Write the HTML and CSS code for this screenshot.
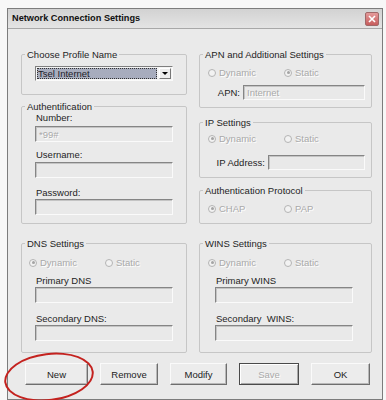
FILE: index.html
```html
<!DOCTYPE html>
<html lang="en">
  <head>
    <meta charset="UTF-8" />
    <title>Network Connection Settings</title>
    <link rel="stylesheet" href="styles.css">
  </head>
  <body>
    <div class="window">
      <div class="titlebar">
        <span class="title">Network Connection Settings</span>
        <span class="close">
          <svg width="8" height="8" viewBox="0 0 8 8">
            <path d="M1 1L7 7M7 1L1 7" stroke="#fff" stroke-width="1.6" />
          </svg>
        </span>
      </div>

      <div class="content">
        <div class="columns">
          <div class="col">
            <fieldset class="group profile">
              <legend>Choose Profile Name</legend>
              <div class="inner">
                <div class="combo">
                  <span class="combo-value">Tsel Internet</span>
                  <span class="combo-btn"><span class="arrow"></span></span>
                </div>
              </div>
            </fieldset>

            <fieldset class="group auth">
              <legend>Authentification</legend>
              <div class="inner">
                <div class="label first">Number:</div>
                <div class="field gap3"><span class="dim">*99#</span></div>
                <div class="label gap6">Username:</div>
                <div class="field gap1"></div>
                <div class="label gap8">Password:</div>
                <div class="field"></div>
              </div>
            </fieldset>
          </div>

          <div class="col">
            <fieldset class="group apn">
              <legend>APN and Additional Settings</legend>
              <div class="radios gap5">
                <span class="radio"><i class="dot"></i><span class="dim">Dynamic</span></span>
                <span class="radio"><i class="dot on"></i><span class="dim">Static</span></span>
              </div>
              <div class="row gap6">
                <span>APN:</span>
                <div class="field apn-field"><span class="dim">Internet</span></div>
              </div>
            </fieldset>

            <fieldset class="group ip">
              <legend>IP Settings</legend>
              <div class="radios gap3">
                <span class="radio"><i class="dot on"></i><span class="dim">Dynamic</span></span>
                <span class="radio"><i class="dot"></i><span class="dim">Static</span></span>
              </div>
              <div class="row gap10">
                <span>IP Address:</span>
                <div class="field ip-field"></div>
              </div>
            </fieldset>

            <fieldset class="group proto">
              <legend>Authentication Protocol</legend>
              <div class="radios gap5">
                <span class="radio"><i class="dot on"></i><span class="dim">CHAP</span></span>
                <span class="radio"><i class="dot"></i><span class="dim">PAP</span></span>
              </div>
            </fieldset>
          </div>
        </div>

        <div class="columns lower">
          <fieldset class="group dns">
            <legend>DNS Settings</legend>
            <div class="radios gap6">
              <span class="radio"><i class="dot on"></i><span class="dim">Dynamic</span></span>
              <span class="radio"><i class="dot"></i><span class="dim">Static</span></span>
            </div>
            <div class="inner">
              <div class="label gap5">Primary DNS</div>
              <div class="field"></div>
              <div class="label gap9">Secondary DNS:</div>
              <div class="field"></div>
            </div>
          </fieldset>

          <fieldset class="group wins">
            <legend>WINS Settings</legend>
            <div class="radios gap6">
              <span class="radio"><i class="dot on"></i><span class="dim">Dynamic</span></span>
              <span class="radio"><i class="dot"></i><span class="dim">Static</span></span>
            </div>
            <div class="inner wide">
              <div class="label gap5">Primary WINS</div>
              <div class="field"></div>
              <div class="label gap9">Secondary&nbsp; WINS:</div>
              <div class="field"></div>
            </div>
          </fieldset>
        </div>

        <div class="buttons">
          <button class="btn new">New</button>
          <button class="btn remove">Remove</button>
          <button class="btn modify">Modify</button>
          <button class="btn save"><span class="dim">Save</span></button>
          <button class="btn ok">OK</button>
          <div class="circle"></div>
        </div>
      </div>
    </div>
  </body>
</html>
```

FILE: styles.css
```css
* {
  box-sizing: border-box;
  margin: 0;
  padding: 0;
}

body {
  background-color: #f7f7f7;
  font-family: "Liberation Sans", Arial, sans-serif;
  font-size: 9.5px;
  line-height: 13px;
  color: #1e1e1e;
}

.window {
  margin: 8px 0 0 7px;
  width: 376px;
  border: 1px solid #7c7c7c;
  background-color: #eaeaea;
}

.titlebar {
  height: 20px;
  display: flex;
  align-items: center;
  justify-content: space-between;
  padding: 0 3px 0 4px;
  background: linear-gradient(#d2d2d2, #e4e4e4);
  border-bottom: 1px solid #a8a8a8;
}

.title {
  font-weight: bold;
  font-size: 9.2px;
  color: #111;
}

.close {
  width: 14px;
  height: 14px;
  display: flex;
  align-items: center;
  justify-content: center;
  border: 1px solid #a06868;
  border-radius: 2px;
  background: linear-gradient(#e49a9a, #c65c5c);
}

.content {
  position: relative;
  padding: 19px 10px 14px 13px;
}

.columns {
  display: grid;
  grid-template-columns: 166px 173px;
  column-gap: 12px;
}

.lower {
  margin-top: 13px;
}

.col {
  display: flex;
  flex-direction: column;
}

.group {
  border: 1px solid #c6c6c6;
  border-radius: 2px;
  padding: 0;
  min-width: 0;
}

.group legend {
  margin-left: 3px;
  padding: 0 2px;
  line-height: 13px;
}

.inner {
  padding: 0 13px;
}

.inner.wide {
  padding: 0 18px 0 15px;
}

.profile {
  height: 47px;
}

.auth {
  height: 124px;
  margin-top: 5px;
}

.apn {
  height: 60px;
}

.ip {
  height: 62px;
  margin-top: 8px;
}

.proto {
  height: 40px;
  margin-top: 6px;
}

.dns,
.wins {
  height: 116px;
}

.dns .radios {
  padding-left: 7px;
}

.label {
  padding-left: 1px;
}

.first {
  margin-top: -1px;
  line-height: 11px;
}

.gap1 { margin-top: 1px; }
.gap3 { margin-top: 3px; }
.gap5 { margin-top: 5px; }
.gap6 { margin-top: 6px; }
.gap8 { margin-top: 8px; }
.gap9 { margin-top: 9px; }
.gap10 { margin-top: 10px; }

.field {
  width: 138px;
  height: 16px;
  padding: 1px 3px;
  line-height: 13px;
  background-color: #e9e9e9;
  border: 1px solid;
  border-color: #858585 #fafafa #fafafa #858585;
  box-shadow: inset 1px 1px 0 #c4c4c4;
}

.dim {
  color: #a9a9a9;
  text-shadow: 1px 1px 0 #fff;
}

.combo {
  display: flex;
  margin-top: 5px;
  width: 138px;
  height: 15px;
  padding: 1px;
  background-color: #f4f4f4;
  border: 1px solid;
  border-color: #7f7f7f #fafafa #fafafa #7f7f7f;
}

.combo-value {
  flex: 1;
  line-height: 11px;
  padding-left: 1px;
  background-color: #a7acbd;
  outline: 1px dotted #333;
  outline-offset: -1px;
  color: #1e1e2a;
}

.combo-btn {
  width: 12px;
  margin-left: 2px;
  display: flex;
  align-items: center;
  justify-content: center;
  background-color: #ececec;
  border: 1px solid;
  border-color: #fff #777 #777 #fff;
}

.arrow {
  border-left: 3px solid transparent;
  border-right: 3px solid transparent;
  border-top: 3px solid #000;
}

.radios {
  display: flex;
  padding-left: 8px;
}

.radio {
  width: 76px;
  display: flex;
  align-items: center;
  gap: 3px;
}

.dot {
  width: 8px;
  height: 8px;
  border-radius: 50%;
  border: 1px solid #b4b4b4;
  background-color: #f2f2f2;
  display: flex;
  align-items: center;
  justify-content: center;
}

.dot.on::after {
  content: "";
  width: 3px;
  height: 3px;
  border-radius: 50%;
  background-color: #a4a4a4;
}

.row {
  display: flex;
  align-items: center;
  justify-content: flex-end;
  gap: 3px;
  padding-right: 6px;
}

.apn-field {
  width: 122px;
  height: 15px;
  line-height: 11px;
}

.ip-field {
  width: 97px;
  height: 15px;
}

.buttons {
  position: relative;
  margin-top: 10px;
  display: flex;
  gap: 12px;
  padding-left: 4px;
}

.btn {
  height: 22px;
  font-family: inherit;
  font-size: 9.5px;
  color: #222;
  background-color: #ececec;
  border: 1px solid;
  border-color: #fafafa #6e6e6e #6e6e6e #fafafa;
  box-shadow: inset -1px -1px 0 #b8b8b8;
}

.new { width: 63px; }
.remove { width: 58px; }
.modify { width: 57px; }
.save {
  width: 60px;
  border-color: #4a4a4a;
  box-shadow: inset 1px 1px 0 #fff, inset -1px -1px 0 #a8a8a8;
}
.ok { width: 59px; }

.circle {
  position: absolute;
  left: -17px;
  top: -10px;
  width: 90px;
  height: 48px;
  border: 2.5px solid #c4221f;
  border-radius: 50%;
  transform: rotate(-7deg);
}
```
